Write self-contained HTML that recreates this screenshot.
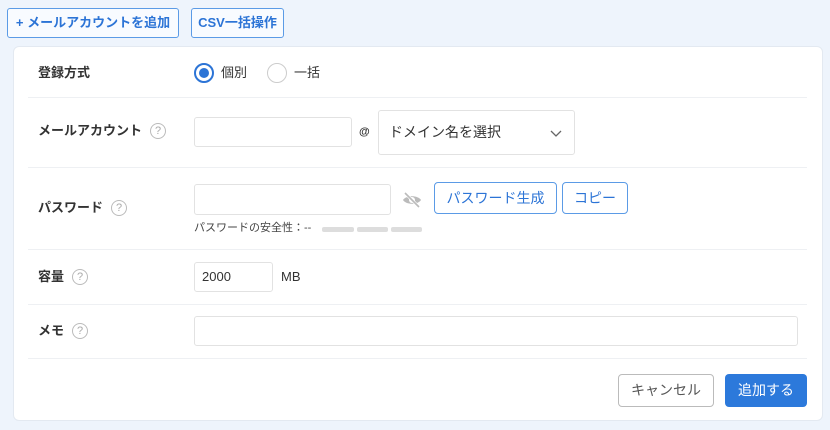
<!DOCTYPE html>
<html><head><meta charset="utf-8"><style>
*{box-sizing:border-box;margin:0;padding:0}
body{width:830px;height:430px;background:#eef4fc;font-family:"Liberation Sans","Noto Sans CJK JP",sans-serif;position:relative;overflow:hidden;color:#333}
.a{position:absolute}
.tb{position:absolute;top:8px;height:30px;border:1px solid #5b9be6;border-radius:3px;background:#f8fbff;color:#2c74d6;font-weight:bold;font-size:13px;line-height:28px;text-align:center;white-space:nowrap}
.card{position:absolute;left:13px;top:46px;width:810px;height:375px;background:#fff;border-radius:6px;border:1px solid #e3e9f1}
.line{position:absolute;left:28px;width:779px;height:1px;background:#eef0f3}
.lab{position:absolute;left:38px;font-size:13px;font-weight:bold;color:#333;line-height:18px;display:flex;align-items:center;height:18px}
.q{display:inline-block;width:16px;height:16px;border:1.3px solid #bbb;border-radius:50%;color:#aaa;font-size:11px;line-height:14px;text-align:center;font-weight:normal;margin-left:8px}
.inp{position:absolute;border:1px solid #e2e2e2;border-radius:3px;background:#fff}
.btn{position:absolute;border:1px solid #5b9be6;border-radius:4px;color:#2c74d6;font-size:14px;text-align:center;background:#fff}
</style></head><body>
<div class="tb" style="left:7px;width:172px">+ メールアカウントを追加</div>
<div class="tb" style="left:191px;width:93px">CSV一括操作</div>
<div class="card"></div>
<div class="lab" style="top:64px">登録方式</div>
<div class="a" style="left:194px;top:63px;width:20px;height:20px;border:2px solid #2c74d6;border-radius:50%"><div style="margin:3px;width:10px;height:10px;border-radius:50%;background:#2c74d6"></div></div>
<div class="a" style="left:221px;top:65px;font-size:13px;line-height:16px">個別</div>
<div class="a" style="left:267px;top:63px;width:20px;height:20px;border:1.5px solid #ccc;border-radius:50%"></div>
<div class="a" style="left:294px;top:65px;font-size:13px;line-height:16px">一括</div>
<div class="line" style="top:97px"></div>
<div class="lab" style="top:122px">メールアカウント<span class="q">?</span></div>
<div class="inp" style="left:194px;top:117px;width:158px;height:30px"></div>
<div class="a" style="left:359px;top:126px;font-size:11px;font-weight:bold;line-height:12px">@</div>
<div class="inp" style="left:378px;top:110px;width:197px;height:45px"></div>
<div class="a" style="left:389px;top:124px;font-size:14px;line-height:17px">ドメイン名を選択</div>
<svg class="a" style="left:550px;top:130px" width="12" height="8"><path d="M1 1l5 5 5-5" stroke="#666" stroke-width="1.3" fill="none"/></svg>
<div class="line" style="top:167px"></div>
<div class="lab" style="top:199px">パスワード<span class="q">?</span></div>
<div class="inp" style="left:194px;top:184px;width:197px;height:31px"></div>
<svg class="a" style="left:402px;top:192px" width="20" height="16" viewBox="0 0 20 16"><path d="M1 8c3-5 15-5 18 0c-3 5-15 5-18 0z" fill="#bbb"/><circle cx="10" cy="8" r="3" fill="#fff"/><path d="M3 1l14 14" stroke="#fff" stroke-width="3"/><path d="M3 1l14 14" stroke="#bbb" stroke-width="1.6"/></svg>
<div class="btn" style="left:434px;top:182px;width:123px;height:32px;line-height:30px">パスワード生成</div>
<div class="btn" style="left:562px;top:182px;width:66px;height:32px;line-height:30px">コピー</div>
<div class="a" style="left:194px;top:222px;font-size:11px;color:#444;line-height:13px">パスワードの安全性：--</div>
<div class="a" style="left:322px;top:227px;width:32px;height:5px;background:#ddd;border-radius:2px"></div>
<div class="a" style="left:357px;top:227px;width:31px;height:5px;background:#ddd;border-radius:2px"></div>
<div class="a" style="left:391px;top:227px;width:31px;height:5px;background:#ddd;border-radius:2px"></div>
<div class="line" style="top:249px"></div>
<div class="lab" style="top:268px">容量<span class="q">?</span></div>
<div class="inp" style="left:194px;top:262px;width:79px;height:30px"></div>
<div class="a" style="left:202px;top:269px;font-size:13px;line-height:16px">2000</div>
<div class="a" style="left:281px;top:269px;font-size:13px;line-height:16px">MB</div>
<div class="line" style="top:304px"></div>
<div class="lab" style="top:322px">メモ<span class="q">?</span></div>
<div class="inp" style="left:194px;top:316px;width:604px;height:30px"></div>
<div class="line" style="top:358px"></div>
<div class="a" style="left:618px;top:374px;width:96px;height:33px;border:1px solid #bbb;border-radius:4px;font-size:14px;line-height:31px;text-align:center;color:#555">キャンセル</div>
<div class="a" style="left:725px;top:374px;width:82px;height:33px;background:#2c79db;border-radius:4px;font-size:14px;line-height:33px;text-align:center;color:#fff">追加する</div>
</body></html>
